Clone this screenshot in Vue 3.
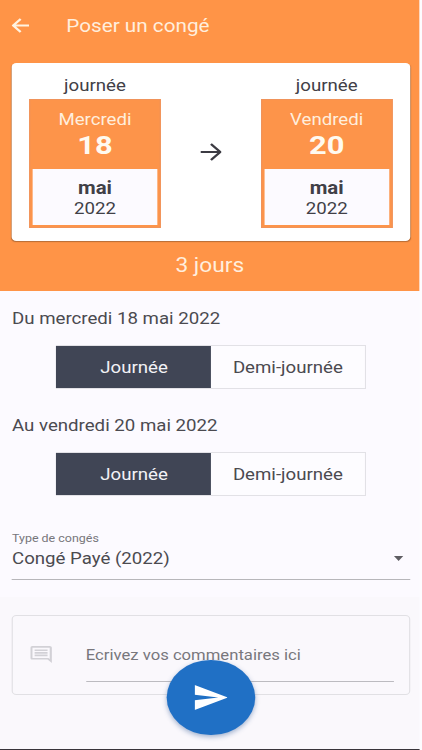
<script setup>
import { ref } from 'vue'

const days = [
  { period: 'journée', weekday: 'Mercredi', day: '18', month: 'mai', year: '2022' },
  { period: 'journée', weekday: 'Vendredi', day: '20', month: 'mai', year: '2022' }
]

const choices = ref([
  { label: 'Du mercredi 18 mai 2022', half: false },
  { label: 'Au vendredi 20 mai 2022', half: false }
])
</script>

<template>
  <div class="screen">
    <header class="header">
      <div class="toolbar">
        <svg class="back" viewBox="0 0 14 14">
          <path d="M14 7H1.5M7.2 0.9L1.2 7L7.2 13.1" />
        </svg>
        <h1>Poser un congé</h1>
      </div>
      <div class="card">
        <template v-for="(d, i) in days" :key="d.weekday">
          <svg v-if="i === 1" class="arrow" viewBox="0 0 18 18">
            <path d="M0 9H16.5M9 1L17 9L9 17" />
          </svg>
          <div class="date">
            <div class="period">{{ d.period }}</div>
            <div class="calendar">
              <div class="top">
                <div class="weekday">{{ d.weekday }}</div>
                <div class="day">{{ d.day }}</div>
              </div>
              <div class="bottom">
                <div class="month">{{ d.month }}</div>
                <div class="year">{{ d.year }}</div>
              </div>
            </div>
          </div>
        </template>
      </div>
      <div class="total">3 jours</div>
    </header>

    <main class="form">
      <section v-for="c in choices" :key="c.label" class="choice">
        <div class="label">{{ c.label }}</div>
        <div class="toggle">
          <button :class="{ active: !c.half }" @click="c.half = false">Journée</button>
          <button :class="{ active: c.half }" @click="c.half = true">Demi-journée</button>
        </div>
      </section>
      <div class="select">
        <div class="hint">Type de congés</div>
        <div class="value">
          <span>Congé Payé (2022)</span>
          <i class="caret"></i>
        </div>
      </div>
    </main>

    <footer class="footer">
      <div class="comment">
        <svg class="comment-icon" viewBox="2 2 20 20" preserveAspectRatio="none">
          <path d="M21.99 4c0-1.1-.89-2-1.99-2H4c-1.1 0-2 .9-2 2v12c0 1.1.9 2 2 2h14l4 4-.01-18zM20 4v13.17L18.83 16H4V4h16zM6 12h12v2H6zm0-3h12v2H6zm0-3h12v2H6z" />
        </svg>
        <div class="field">Ecrivez vos commentaires ici</div>
      </div>
      <button class="send">
        <svg viewBox="2 3 21 18" preserveAspectRatio="none">
          <path d="M2.01 21L23 12L2.01 3L2 10l15 2-15 2z" />
        </svg>
      </button>
    </footer>
  </div>
</template>

<style>
body {
  background: #fdfcff;
}
</style>

<style scoped>
.screen {
  position: relative;
  width: 360px;
  height: 750px;
  box-sizing: border-box;
  display: flex;
  flex-direction: column;
  overflow: hidden;
  transform: scaleX(1.1655);
  transform-origin: 0 0;
  background: #fcfaff;
  border-bottom: 1px solid #38343a;
  color: #4b4a50;
  font-family: Roboto, "Liberation Sans", sans-serif;
  font-size: 16px;
}

.header {
  height: 291px;
  background: #ff9447;
  color: #ffeedd;
}

.toolbar {
  height: 63px;
  box-sizing: border-box;
  padding: 0 0 13px 10px;
  display: flex;
  align-items: center;
}

.back {
  width: 15px;
  height: 15px;
  fill: none;
  stroke: #fff3e2;
  stroke-width: 1.9;
}

h1 {
  margin: 1px 0 0 31.8px;
  font-size: 17.8px;
  font-weight: 400;
  line-height: 22px;
}

.card {
  height: 178px;
  margin: 0 8.5px 0 10.3px;
  box-sizing: border-box;
  padding: 12px 14.7px 0;
  display: flex;
  justify-content: space-between;
  background: #fff;
  border-radius: 4px;
  box-shadow: 0 1px 1px rgba(110, 70, 40, 0.5);
  color: #414047;
  text-align: center;
}

.date {
  width: 113px;
}

.period {
  height: 24px;
  line-height: 22px;
}

.calendar {
  height: 129px;
  box-sizing: border-box;
  padding: 0 3px 3px;
  background: #fd944a;
  box-shadow: inset 0 0 0 1px #f0935a;
}

.top {
  height: 70px;
  box-sizing: border-box;
  padding-top: 11px;
  color: #ffeedd;
}

.weekday {
  line-height: 20px;
}

.day {
  font-size: 26.5px;
  font-weight: 700;
  line-height: 30px;
  color: #fffaf0;
}

.bottom {
  height: 56px;
  box-sizing: border-box;
  padding-top: 9px;
  background: #fcfaff;
}

.month {
  font-size: 17.5px;
  font-weight: 700;
  line-height: 20px;
}

.year {
  line-height: 21px;
}

.arrow {
  width: 18px;
  height: 18px;
  margin-top: 68px;
  fill: none;
  stroke: #3c3b43;
  stroke-width: 2.1;
}

.total {
  height: 50px;
  line-height: 49px;
  font-size: 19.5px;
  text-align: center;
}

.form {
  height: 306px;
  padding: 17px 8.5px 0 10.3px;
  box-sizing: border-box;
}

.choice {
  height: 107px;
}

.label {
  height: 37px;
  line-height: 21px;
}

.toggle {
  width: 266px;
  height: 44px;
  margin-left: 37.7px;
  display: grid;
  grid-template-columns: 1fr 1fr;
  box-sizing: border-box;
  border: 1px solid #e2e1e6;
}

.toggle button {
  padding: 0;
  border: 0;
  background: #fdfcff;
  color: #4b4a50;
  font: inherit;
}

.toggle .active {
  margin-left: -1px;
  padding-left: 1px;
  background: #404555;
  color: #f2f2f6;
}

.select {
  padding-top: 9px;
  height: 48px;
  border-bottom: 1px solid #b7b6ba;
}

.hint {
  font-size: 10.7px;
  line-height: 15px;
  color: #77767b;
}

.value {
  display: flex;
  align-items: center;
  justify-content: space-between;
  line-height: 25px;
}

.caret {
  margin-right: 6px;
  border: 4.5px solid transparent;
  border-top: 5px solid #5e5d62;
  border-bottom: 0;
}

.footer {
  flex: 1;
  padding: 18px 8.5px 0 10.3px;
  background: #faf8fc;
}

.comment {
  height: 80px;
  box-sizing: border-box;
  padding: 0 13px 0 15px;
  display: flex;
  border: 1px solid #e1e0e4;
  border-radius: 4px;
}

.comment-icon {
  width: 18.5px;
  height: 17px;
  margin-top: 30px;
  fill: #d2d1d6;
}

.field {
  flex: 1;
  height: 65px;
  margin-left: 28.8px;
  border-bottom: 1px solid #bcbbc0;
  font-size: 14.3px;
  line-height: 79px;
  color: #78777c;
}

.send {
  position: absolute;
  left: 143px;
  top: 660px;
  width: 75.5px;
  height: 75px;
  padding: 0;
  border: 0;
  border-radius: 50%;
  background: #2070c5;
  box-shadow: 0 2px 5px rgba(50, 90, 150, 0.45);
}

.send svg {
  display: block;
  width: 28.5px;
  height: 25px;
  margin: 0 auto;
  fill: #fff;
}
</style>
